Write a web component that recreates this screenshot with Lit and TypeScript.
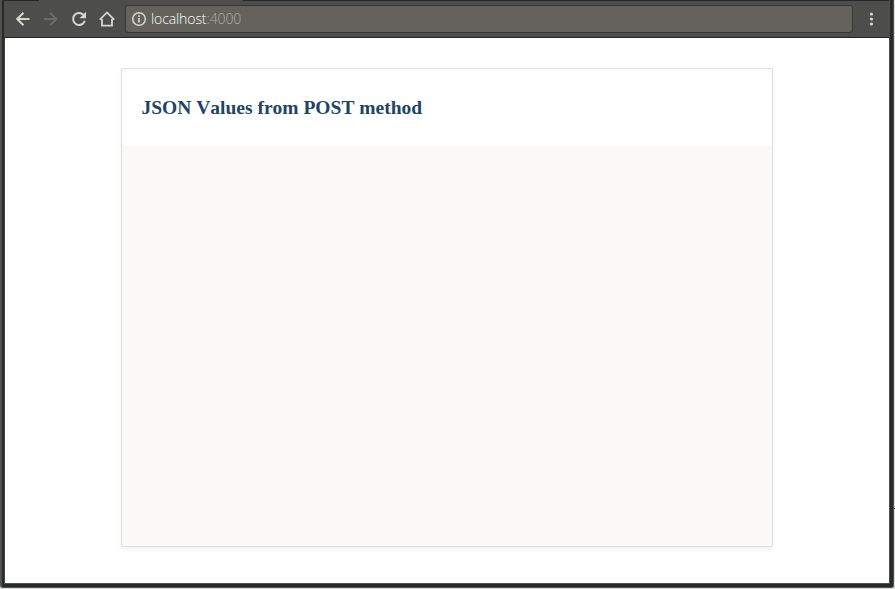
import { LitElement, html, css, svg } from "lit";
import { customElement } from "lit/decorators.js";

@customElement("browser-toolbar")
class BrowserToolbar extends LitElement {
  static styles = css`
    :host {
      display: flex;
      align-items: center;
      box-sizing: border-box;
      height: 38px;
      padding: 1px 8px 1px 9px;
      background:
        linear-gradient(#25272b, #25272b) 0 0 / 35px 1px no-repeat,
        linear-gradient(#25272b, #25272b) 239px 0 / 100% 1px no-repeat,
        #4d4d4b;
      border-bottom: 1px solid #242424;
      font-family: "Open Sans", "Noto Sans", sans-serif;
    }
    .button { display: block; width: 20px; height: 20px; margin-right: 8px; color: #d8d6cf; }
    .disabled { color: #6c6b65; }
    .address {
      display: flex;
      align-items: center;
      box-sizing: border-box;
      flex: 1;
      height: 28px;
      border: 1px solid #373734;
      border-radius: 3px;
      background: #63625c;
      padding-left: 5px;
    }
    .info { display: block; width: 16px; height: 16px; color: #d8d6cf; margin-right: 4px; }
    .url { font-size: 14px; line-height: 20px; font-weight: 300; color: #fff; letter-spacing: -0.1px; white-space: nowrap; }
    .port { color: #b0afa7; }
    .menu { display: block; width: 20px; height: 20px; margin-left: 8px; color: #d8d6cf; }
  `;

  render() {
    return html`
      <svg class="button" viewBox="0 0 20 20" fill="none" stroke="currentColor" stroke-width="2">
        ${svg`<path d="M16.5 10H4.5M10.5 3.7L4.2 10l6.3 6.3"/>`}
      </svg>
      <svg class="button disabled" viewBox="0 0 20 20" fill="none" stroke="currentColor" stroke-width="2">
        ${svg`<path d="M3 10h12M9 3.7l6.3 6.3-6.3 6.3"/>`}
      </svg>
      <svg class="button" viewBox="0 0 20 20" fill="none" stroke="currentColor" stroke-width="2">
        ${svg`<path d="M15.8 11.8A6 6 0 1 1 14.4 5.8"/><path d="M17 2.8v6.4h-6.4z" fill="currentColor" stroke="none"/>`}
      </svg>
      <svg class="button" viewBox="0 0 20 20" fill="none" stroke="currentColor" stroke-width="1.8">
        ${svg`<path d="M2.8 10.6L10 3.4l7.2 7.2M5 10v6.7h10V10"/>`}
      </svg>
      <div class="address">
        <svg class="info" viewBox="0 0 16 16" fill="none" stroke="currentColor">
          ${svg`<circle cx="8" cy="8" r="6.3" stroke-width="1.5"/><path d="M8 7v4.5M8 4.3v1.8" stroke-width="1.7"/>`}
        </svg>
        <span class="url">localhost<span class="port">:4000</span></span>
      </div>
      <svg class="menu" viewBox="0 0 20 20" fill="currentColor">
        ${svg`<circle cx="10.5" cy="5" r="1.6"/><circle cx="10.5" cy="10" r="1.6"/><circle cx="10.5" cy="15" r="1.6"/>`}
      </svg>
    `;
  }
}

@customElement("app-root")
class AppRoot extends LitElement {
  static styles = css`
    :host {
      display: block;
      width: 895px;
      height: 589px;
      overflow: hidden;
      background: linear-gradient(#000, #000) 894px 508px / 1px 1px no-repeat, #d9d9d9;
    }
    .window {
      box-sizing: border-box;
      width: 894px;
      height: 588px;
      padding: 0 1px 1px 2px;
      background: #50524f;
      border-radius: 0 0 3px 3px;
    }
    .frame {
      box-sizing: border-box;
      height: 587px;
      border: solid #292b2a;
      border-width: 0 3px 3px 2px;
    }
    .inner {
      box-sizing: border-box;
      display: flex;
      flex-direction: column;
      height: 584px;
      border: solid #50524f;
      border-width: 0 1px 1px 0;
    }
    .page {
      flex: 1;
      box-sizing: border-box;
      border-left: 1px solid #454744;
      background: #fff;
      padding-top: 30px;
    }
    .card {
      box-sizing: border-box;
      width: 652px;
      height: 479px;
      margin-left: 116px;
      border: 1px solid #dfdfdc;
      border-radius: 2px;
      background: #faf9f7;
      box-shadow: 0 3px 4px rgba(0, 0, 0, 0.05);
      overflow: hidden;
    }
    .heading {
      box-sizing: border-box;
      height: 77px;
      margin: 0;
      padding: 27px 19px 0 19.5px;
      background: #fff;
      color: #1d4567;
      font: bold 19.5px/24px "Liberation Serif", "Times New Roman", serif;
      font-kerning: none;
      white-space: nowrap;
    }
  `;

  render() {
    return html`
      <div class="window">
        <div class="frame">
          <div class="inner">
            <browser-toolbar></browser-toolbar>
            <main class="page">
              <section class="card">
                <h3 class="heading">JSON Values from POST method</h3>
              </section>
            </main>
          </div>
        </div>
      </div>
    `;
  }
}
